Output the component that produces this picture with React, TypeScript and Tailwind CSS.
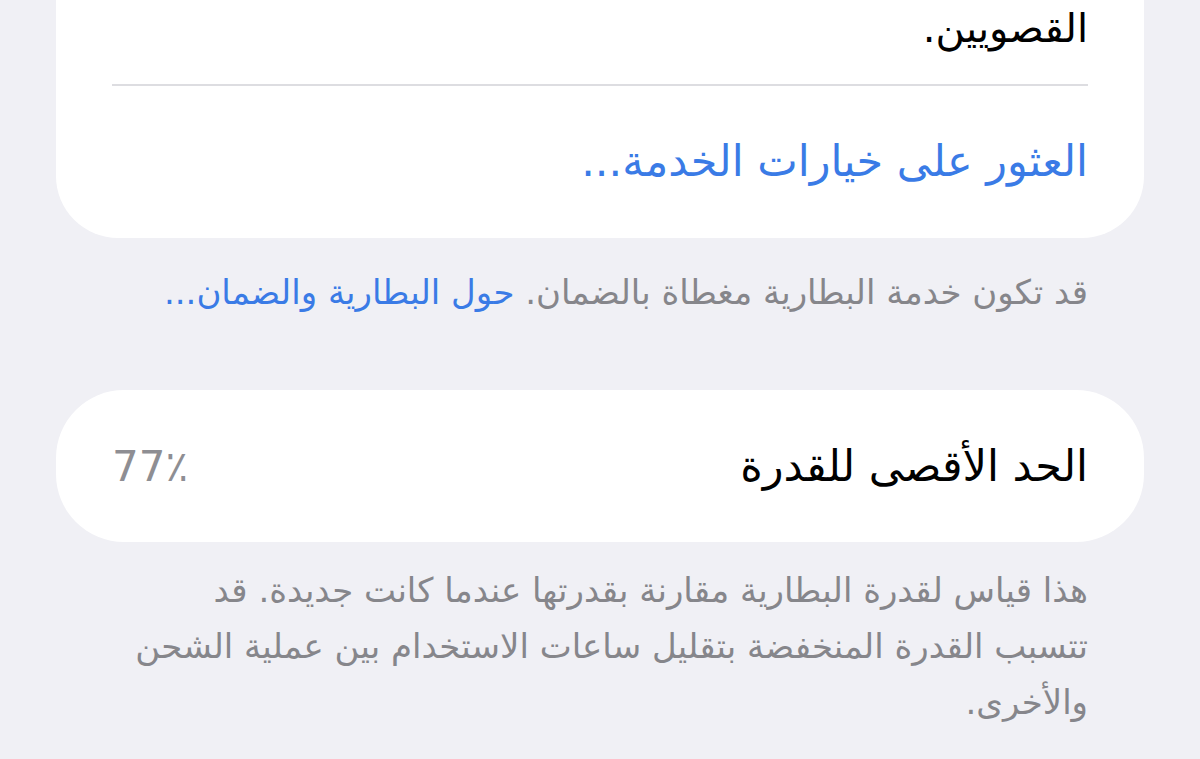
import React from 'react';

const font = { fontFamily: '"DejaVu Sans", sans-serif' };

const App = () => {
  return (
    <div
      dir="rtl"
      className="w-[1200px] h-[759px] overflow-hidden bg-[#f0f0f5] px-[56px]"
      style={font}
    >
      {/* Service card (top cut off) */}
      <div className="bg-white rounded-b-[62px] px-[56px]">
        <div className="h-[84px] flex items-start">
          <p className="text-[40px] leading-[56px] text-black">القصويين.</p>
        </div>
        <div className="h-[2px] bg-[#dddde1]" />
        <div className="h-[152px] flex items-center pb-[2px]">
          <span className="text-[43px] text-[#3a7be6]">العثور على خيارات الخدمة...</span>
        </div>
      </div>

      <p className="px-[56px] pt-[34px] text-[34px] leading-[40px] text-[#86868b] whitespace-nowrap">
        قد تكون خدمة البطارية مغطاة بالضمان.{' '}
        <span className="text-[#3a7be6]">حول البطارية والضمان...</span>
      </p>

      {/* Maximum capacity */}
      <div className="mt-[78px] bg-white rounded-[68px] h-[152px] px-[56px] flex items-center justify-between">
        <span className="text-[43px] text-black">الحد الأقصى للقدرة</span>
        <span dir="ltr" className="text-[42px] text-[#8e8e93]">77٪</span>
      </div>

      <div className="px-[56px] pt-[20px] text-[34px] leading-[56px] text-[#86868b]">
        <div className="whitespace-nowrap">هذا قياس لقدرة البطارية مقارنة بقدرتها عندما كانت جديدة. قد</div>
        <div className="whitespace-nowrap">تتسبب القدرة المنخفضة بتقليل ساعات الاستخدام بين عملية الشحن</div>
        <div className="whitespace-nowrap">والأخرى.</div>
      </div>
    </div>
  );
};

export default App;
